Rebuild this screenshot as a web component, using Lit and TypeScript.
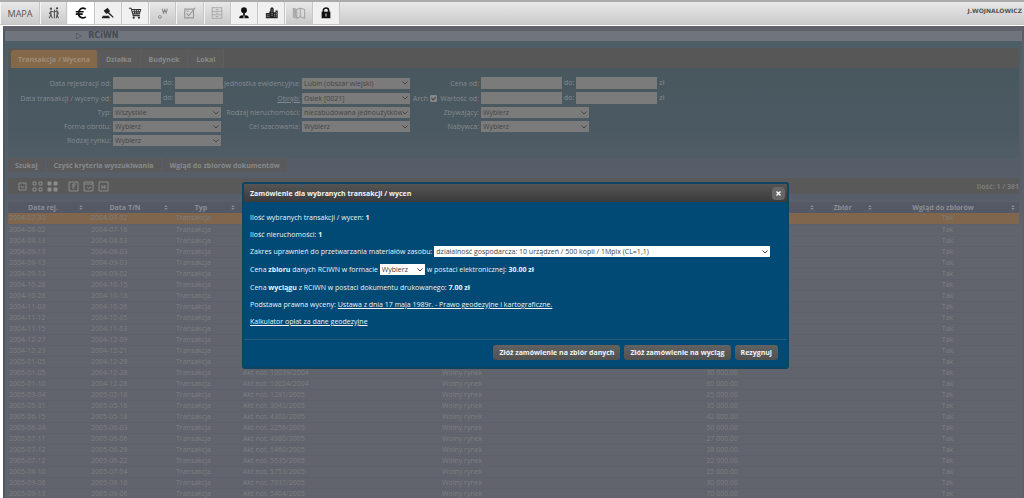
import { LitElement, html, css, svg, nothing } from "lit";
import { customElement } from "lit/decorators.js";
import { classMap } from "lit/directives/class-map.js";

const tools = [
  { name: "Geodeta", state: "", icon: svg`<circle cx="4.500" cy="3" r="1.300" fill="#444"/><circle cx="11.500" cy="2.600" r="1.300" fill="#444"/><path d="M4.500 5v4.500M4.500 9.500 2.500 14M4.500 9.500 6 14M4.500 6 2.500 9M5 6l3 1M8.500 4v10M8.500 7l3-2M11.500 5v4.500M11.500 9.500 10.500 14M11.500 9.500 13 14M12 5.500l1 4" fill="none" stroke="#555" stroke-width="1.200"/>` },
  { name: "Transakcje", state: "active", icon: svg`<path d="M13.500 3.600C9 .8 5.500 3.500 5.200 8s3.800 7.200 8.300 4.400M2 6.600h9M2 9.300h8" fill="none" stroke="#111" stroke-width="1.900"/>` },
  { name: "Licytacje", state: "on", icon: svg`<path d="M3 5.500 7.500 2l3 4L6 9.200zM2 11h7v1.200h1V14H1v-1.800h1zM8 6l6.500 6.500-1 1L7 7.500z" fill="#222"/>` },
  { name: "Koszyk", state: "on", icon: svg`<path d="M1 2.500h2.500L6 11h7.500M4 4h10.500L13 9H5.500M7 4l.8 5M9.500 4v5M12 4l-.8 5M4.500 6.500H14" fill="none" stroke="#333" stroke-width="1.200"/><circle cx="6.500" cy="13.300" r="1.300" fill="#333"/><circle cx="12.500" cy="13.300" r="1.300" fill="#333"/>` },
  { name: "Wody", state: "", icon: svg`<path d="m7 3 1.500 5L10 4l1.500 4L13 3" fill="none" stroke="#888" stroke-width="1.200"/><circle cx="4.500" cy="12.500" r="1.600" fill="none" stroke="#888"/>` },
  { name: "Zadania", state: "", icon: svg`<path d="M2 3.500h10v10H2zM4 6h3M4 8.500l2.500 2.500L14 2" fill="none" stroke="#999" stroke-width="1.300"/>` },
  { name: "Archiwum", state: "", icon: svg`<path d="M2.500 2h11v12h-11zM2.500 6h11M2.500 10h11M6.500 4h3M6.500 8h3M6.500 12h3" fill="none" stroke="#aaa" stroke-width="1.200"/>` },
  { name: "Podmioty", state: "on", icon: svg`<circle cx="8" cy="4.800" r="3.300" fill="#111"/><path d="M7 8h2v3H7zM2.500 14c0-3.500 4-4 5-2.500V14zM13.500 14c0-3.500-4-4-5-2.500V14z" fill="#111"/>` },
  { name: "Budynki", state: "on", icon: svg`<path d="M1 8h4V6h1V3l2-2 2 2v4h2V5h2.500v9H1z" fill="#222"/><path d="M2.500 9.500v3M4.500 9.500v3M8 4v8M11 9v4M13 7v5" stroke="#ddd" stroke-width=".8" stroke-dasharray="1.200 .8"/>` },
  { name: "Mapy", state: "", icon: svg`<path d="m1.500 2.500 4 1.500v10l-4-1.500zM5.500 4l4-1.500v10l-4 1.500M9.500 2.500l5 1.500v10l-5-1.500" fill="none" stroke="#999"/><path d="m2 3 3 1.300v8.500L2 12z" fill="#aaa"/>` },
  { name: "Blokada", state: "on", icon: svg`<path d="M5 7V5c0-3.500 6-3.500 6 0v2" fill="none" stroke="#111" stroke-width="1.800"/><path d="M3 6.500h10V14H3z" fill="#111"/><path d="M7.400 8.500h1.200v3.500H7.400z" fill="#ddd"/>` },
];

const gridIcons = [
  svg`<path d="M2 2h7v7H2z" fill="none"/><path d="m4 5 1.500 2L7 5" fill="none"/>`,
  svg`<path d="M1 1h3v3H1zM7 1h3v3H7zM1 7h3v3H1zM7 7h3v3H7z" fill="none"/>`,
  svg`<path d="M1 1h3v3H1zM7 1h3v3H7zM1 7h3v3H1zM7 7h3v3H7z" fill="currentColor"/>`,
];
const exportIcons = [
  svg`<path d="M1 1h9v9H1zM5 3h3M5 5h2M5 3v5" fill="none"/>`,
  svg`<path d="M1 1h9v9H1zM1 3h9M4 6l1.500 1.500L8 6" fill="none"/>`,
  svg`<path d="M1 1h9v9H1zM4 4v4M7 4v4M4 6h3" fill="none"/>`,
];

const A = "Akt not. ";
const rows: string[][] = [
  ["2004-07-30", "2004-07-02"], ["2004-08-02", "2004-07-16"], ["2004-08-13", "2004-08-03"],
  ["2004-09-13", "2004-08-03"], ["2004-09-13", "2004-09-03"], ["2004-09-13", "2004-09-02"],
  ["2004-10-28", "2004-10-15"], ["2004-10-28", "2004-10-18"], ["2004-11-03", "2004-10-26"],
  ["2004-11-12", "2004-10-05"], ["2004-11-15", "2004-11-03"], ["2004-12-27", "2004-12-09"],
  ["2004-12-29", "2004-12-21"], ["2005-01-05", "2004-12-28"],
  ["2005-01-05", "2004-12-28", A + "10039/2004", "30 000.00"],
  ["2005-01-10", "2004-12-28", A + "10024/2004", "60 000.00"],
  ["2005-03-04", "2005-02-18", A + "1281/2005", "25 000.00"],
  ["2005-05-31", "2005-05-16", A + "3043/2005", "35 000.00"],
  ["2005-06-15", "2005-05-18", A + "4302/2005", "42 000.00"],
  ["2005-06-24", "2005-06-03", A + "2256/2005", "50 000.00"],
  ["2005-07-11", "2005-06-06", A + "4980/2005", "27 000.00"],
  ["2005-07-12", "2005-06-28", A + "5460/2005", "38 000.00"],
  ["2005-07-12", "2005-06-22", A + "5535/2005", "22 000.00"],
  ["2005-08-10", "2005-07-04", A + "5753/2005", "25 000.00"],
  ["2005-09-06", "2005-08-16", A + "7037/2005", "30 000.00"],
  ["2005-09-13", "2005-09-06", A + "5404/2005", "70 000.00"],
];

const picker = (id: string, value: string) => html`<span class="picker">
  <select id=${id}><option>${value}</option></select>
  <svg class="chevron" viewBox="0 0 6 4" aria-hidden="true"><path d="m.5.5 2.500 2.500L5.500.5" fill="none" stroke="currentColor"/></svg>
</span>`;

const range = (id: string, unit = "") => html`<span class="range">
  <input id=${id} type="text"><label for="${id}-to">do:</label><input id="${id}-to" type="text">${unit ? html`<span>${unit}</span>` : nothing}
</span>`;

const glyph = (shape: unknown) => html`<button class="glyph" type="button" aria-label="Widok"><svg viewBox="0 0 11 11" stroke="currentColor">${shape}</svg></button>`;

@customElement("app-root")
export class AppRoot extends LitElement {
  static styles = css`
    :host { display: block; position: relative; height: 100vh; overflow: hidden; background: #fff; font: 7px/11px "Open Sans", "Noto Sans", sans-serif; color: #848a8e; }
    * { box-sizing: border-box; }
    button, input, select { font: inherit; color: inherit; margin: 0; padding: 0; border: 0; border-radius: 0; background: none; }
    a { color: inherit; }
    .topbar { display: flex; height: 25px; border-top: 2px solid #ababab; border-bottom: 1px solid #c4c4c4; background: linear-gradient(#e8e8e8, #cacaca); color: #555; }
    .tools { display: flex; width: 340px; }
    .tool { flex: 1; display: grid; place-items: center; border-right: 1px solid #c6c6c6; border-left: 1px solid #f4f4f4; }
    .tool.map { flex: none; width: 40px; font-size: 9px; }
    .tool.on { background: #f0f0f0; }
    .tool.active { background: #fff; }
    .tool svg { width: 14px; height: 14px; }
    .user { margin-left: auto; padding: 3px 2px; font: bold 6px/11px "DejaVu Sans", sans-serif; }
    .page { margin: 1px 0 0 3px; border-top: 5px solid #5f616b; border-left: 2px solid #4c5a64; border-right: 2px solid #5c5e68; background: linear-gradient(#4d5e67, #575e69 160px, #61646c 200px); }
    .crumb { display: flex; gap: 6px; height: 10px; padding-left: 71px; background: #6f747d; color: #444b53; font: bold 8px/10px "DejaVu Sans", sans-serif; }
    .content { padding: 7px 3px 0; }
    .tabs { display: flex; height: 20px; padding: 2px 3px 0; background: #575757; }
    .tab { padding: 0 8px; border-right: 1px solid #5e5e5e; background: #5b5a5a; font-weight: bold; }
    .tab.active { padding: 0 7px; border-radius: 3px 3px 0 0; background: #84684a; color: #a08c76; }
    .filters { display: grid; grid-template-columns: 103px 110px 75px 109px 25px 39px auto; justify-content: start; gap: 3px 2px; padding: 9px 0 12px; grid-auto-rows: 11px; grid-template-rows: 12px 12px; align-items: center; background: linear-gradient(#49585f, #4b5962 70%, #515d66); }
    .filters > label { text-align: right; white-space: nowrap; justify-self: end; }
    .c1 { grid-column: 1; }
    .c3 { grid-column: 3; }
    .c6 { grid-column: 6; }
    .under { text-decoration: underline; }
    .range { display: flex; gap: 2px; white-space: nowrap; }
    .range input { height: 12px; width: 48px; background: #7b7b7c; }
    .wide .range input { width: 81px; }
    .picker { display: inline-grid; width: 108px; height: 11px; align-items: center; background: #7b7b7c; color: #454545; }
    .picker select { grid-area: 1 / 1; width: 100%; height: 100%; padding: 0 8px 0 2px; appearance: none; }
    .chevron { grid-area: 1 / 1; justify-self: end; width: 6px; height: 4px; margin-right: 2px; pointer-events: none; }
    .arch { display: flex; gap: 2px; align-items: center; }
    .arch input { appearance: none; display: grid; width: 7px; height: 7px; border-radius: 1px; background: #858585; }
    .arch input::after { content: ""; margin: 1px 2px 2px; border: solid #444; border-width: 0 1px 1px 0; rotate: 45deg; }
    .actions { display: flex; gap: 2px; height: 14px; }
    .actions button { padding: 0 7px; background: #5a5a5c; font-weight: bold; }
    .toolbar { display: flex; align-items: center; gap: 4px; height: 16px; margin-top: 6px; padding: 0 0 0 9px; background: #595959; }
    .glyph { width: 11px; height: 11px; color: #8b8b8b; }
    .glyph svg { display: block; width: 11px; height: 11px; }
    .gap { width: 2px; }
    .count { margin-left: auto; font-weight: bold; color: #7c7c7c; }
    table { width: 100%; margin-top: 8px; border-collapse: collapse; table-layout: fixed; font-size: 7px; line-height: 11px; color: #7c7e82; }
    th { position: relative; height: 11px; padding: 0 9px 0 0; background: #555966; color: #8a8d92; }
    td { height: 11px; padding: 0 4px; border-bottom: 1px solid #5d616b; white-space: nowrap; line-height: 10px; }
    td:first-child { padding-left: 1px; }
    .sort { position: absolute; right: 4px; top: 3px; width: 4px; height: 5px; }
    td.num { text-align: right; padding-right: 2px; }
    .mid { text-align: center; }
    .picked { background: #80664c; }
    .w1 { width: 79px; } .w2 { width: 85px; } .w3 { width: 67px; } .w4 { width: 199px; } .w6 { width: 80px; } .w7 { width: 78px; } .w8 { width: 58px; } .w9 { width: 143px; }
    .dialog { position: absolute; top: 182px; left: 242px; width: 547px; border: 2px solid #0e4460; border-radius: 3px; background: #004a75; color: #eef3f6; }
    .title { display: flex; align-items: center; justify-content: space-between; height: 18px; padding: 0 2px 0 6px; background: linear-gradient(#545454, #3b3b3b); }
    .title h2 { margin: 0; font-size: 7px; }
    .close { display: grid; place-items: center; width: 13px; height: 13px; border-radius: 4px; background: #666; color: #fff; }
    .close svg { width: 5px; height: 5px; }
    .body { display: grid; gap: 6px; padding: 10px 6px 12px; border-bottom: 1px solid #285c78; }
    .line { display: flex; align-items: center; gap: 2px; min-height: 11px; white-space: pre; }
    .line.small { min-height: 13px; }
    .dialog .picker { background: #fff; color: #444; }
    .dialog .large .picker { width: 336px; }
    .dialog .small .picker { width: 45px; }
    .footer { display: flex; justify-content: flex-end; gap: 4px; padding: 5px 9px 7px; }
    .footer button { height: 15px; padding: 0 6px; border-radius: 3px; background: linear-gradient(#626262, #515151); font-weight: bold; }
  `;

  render() {
    return html`
      <header class="topbar">
        <nav class="tools">
          <button class="tool map" type="button">MAPA</button>
          ${tools.map((t) => html`<button type="button" aria-label=${t.name} class=${classMap({ tool: true, on: t.state === "on", active: t.state === "active" })}><svg viewBox="0 0 16 16">${t.icon}</svg></button>`)}
        </nav>
        <span class="user">J.WOJNALOWICZ</span>
      </header>
      <main class="page">
        <div class="crumb"><span>▷</span><span>RCiWN</span></div>
        <div class="content">
          <nav class="tabs">
            <button class="tab active" type="button">Transakcja / Wycena</button>
            <button class="tab" type="button">Działka</button>
            <button class="tab" type="button">Budynek</button>
            <button class="tab" type="button">Lokal</button>
          </nav>
          <form class="filters">
            <label class="c1" for="reg">Data rejestracji od:</label>${range("reg")}
            <label class="c3" for="unit">Jednostka ewidencyjna:</label>${picker("unit", "Lubin (obszar wiejski)")}
            <label class="c6" for="price">Cena od:</label><span class="wide">${range("price", "zł")}</span>
            <label class="c1" for="date">Data transakcji / wyceny od:</label>${range("date")}
            <label class="c3 under" for="area">Obręb:</label>${picker("area", "Osiek [0021]")}
            <span class="arch"><label for="arch">Arch</label><input id="arch" type="checkbox" checked></span>
            <label class="c6" for="value">Wartość od:</label><span class="wide">${range("value", "zł")}</span>
            <label class="c1" for="type">Typ:</label>${picker("type", "Wszystkie")}
            <label class="c3" for="kind">Rodzaj nieruchomości:</label>${picker("kind", "niezabudowana jednoużytków")}
            <label class="c6" for="seller">Zbywający:</label>${picker("seller", "Wybierz")}
            <label class="c1" for="form">Forma obrotu:</label>${picker("form", "Wybierz")}
            <label class="c3" for="goal">Cel szacowania:</label>${picker("goal", "Wybierz")}
            <label class="c6" for="buyer">Nabywca:</label>${picker("buyer", "Wybierz")}
            <label class="c1" for="market">Rodzaj rynku:</label>${picker("market", "Wybierz")}
          </form>
          <div class="actions">
            <button type="button">Szukaj</button>
            <button type="button">Czyść kryteria wyszukiwania</button>
            <button type="button">Wgląd do zbiorów dokumentów</button>
          </div>
          <div class="toolbar">
            ${gridIcons.map(glyph)}<span class="gap"></span>${exportIcons.map(glyph)}
            <span class="count">Ilość: 1 / 381</span>
          </div>
          <table>
            <colgroup><col class="w1"><col class="w2"><col class="w3"><col class="w4"><col><col class="w6"><col class="w7"><col class="w8"><col class="w9"></colgroup>
            <thead><tr>
              ${["Data rej.", "Data T/N", "Typ", "", "", "", "", "Zbiór", "Wgląd do zbiorów"].map((h) => html`<th>${h}<svg class="sort" viewBox="0 0 4 6"><path d="M0 2.500 2 0l2 2.500zM0 3.500h4L2 6z" fill="currentColor"/></svg></th>`)}
            </tr></thead>
            <tbody>
              ${rows.map((r, i) => html`<tr class=${classMap({ picked: i === 0 })}>
                <td>${r[0]}</td><td>${r[1]}</td><td>Transakcja</td><td>${r[2] ?? ""}</td><td>${r[2] ? "Wolny rynek" : ""}</td><td class="num">${r[3] ?? ""}</td><td></td><td></td><td class="mid">Tak</td>
              </tr>`)}
            </tbody>
          </table>
        </div>
      </main>
      <section class="dialog" role="dialog" aria-labelledby="title">
        <div class="title"><h2 id="title">Zamówienie dla wybranych transakcji / wycen</h2>
          <button class="close" type="button" aria-label="Zamknij"><svg viewBox="0 0 5 5"><path d="m.5.5 4 4m0-4-4 4" stroke="currentColor" stroke-width="1.400"/></svg></button></div>
        <div class="body">
          <div class="line"><span>Ilość wybranych transakcji / wycen: <b>1</b></span></div>
          <div class="line"><span>Ilość nieruchomości: <b>1</b></span></div>
          <div class="line large"><label for="scope">Zakres uprawnień do przetwarzania materiałów zasobu:</label>${picker("scope", "działalność gospodarcza: 10 urządzeń / 500 kopii / 1Mpix (CL=1,1)")}</div>
          <div class="line small"><label for="format">Cena <b>zbioru</b> danych RCiWN w formacie</label>${picker("format", "Wybierz")}<span>w postaci elektronicznej: <b>30.00 zł</b></span></div>
          <div class="line"><span>Cena <b>wyciągu</b> z RCiWN w postaci dokumentu drukowanego: <b>7.00 zł</b></span></div>
          <div class="line"><span>Podstawa prawna wyceny: <a href="#ustawa">Ustawa z dnia 17 maja 1989r. - Prawo geodezyjne i kartograficzne.</a></span></div>
          <div class="line"><a href="#kalkulator">Kalkulator opłat za dane geodezyjne</a></div>
        </div>
        <div class="footer">
          <button type="button">Złóż zamówienie na zbiór danych</button>
          <button type="button">Złóż zamówienie na wyciąg</button>
          <button type="button">Rezygnuj</button>
        </div>
      </section>`;
  }
}
